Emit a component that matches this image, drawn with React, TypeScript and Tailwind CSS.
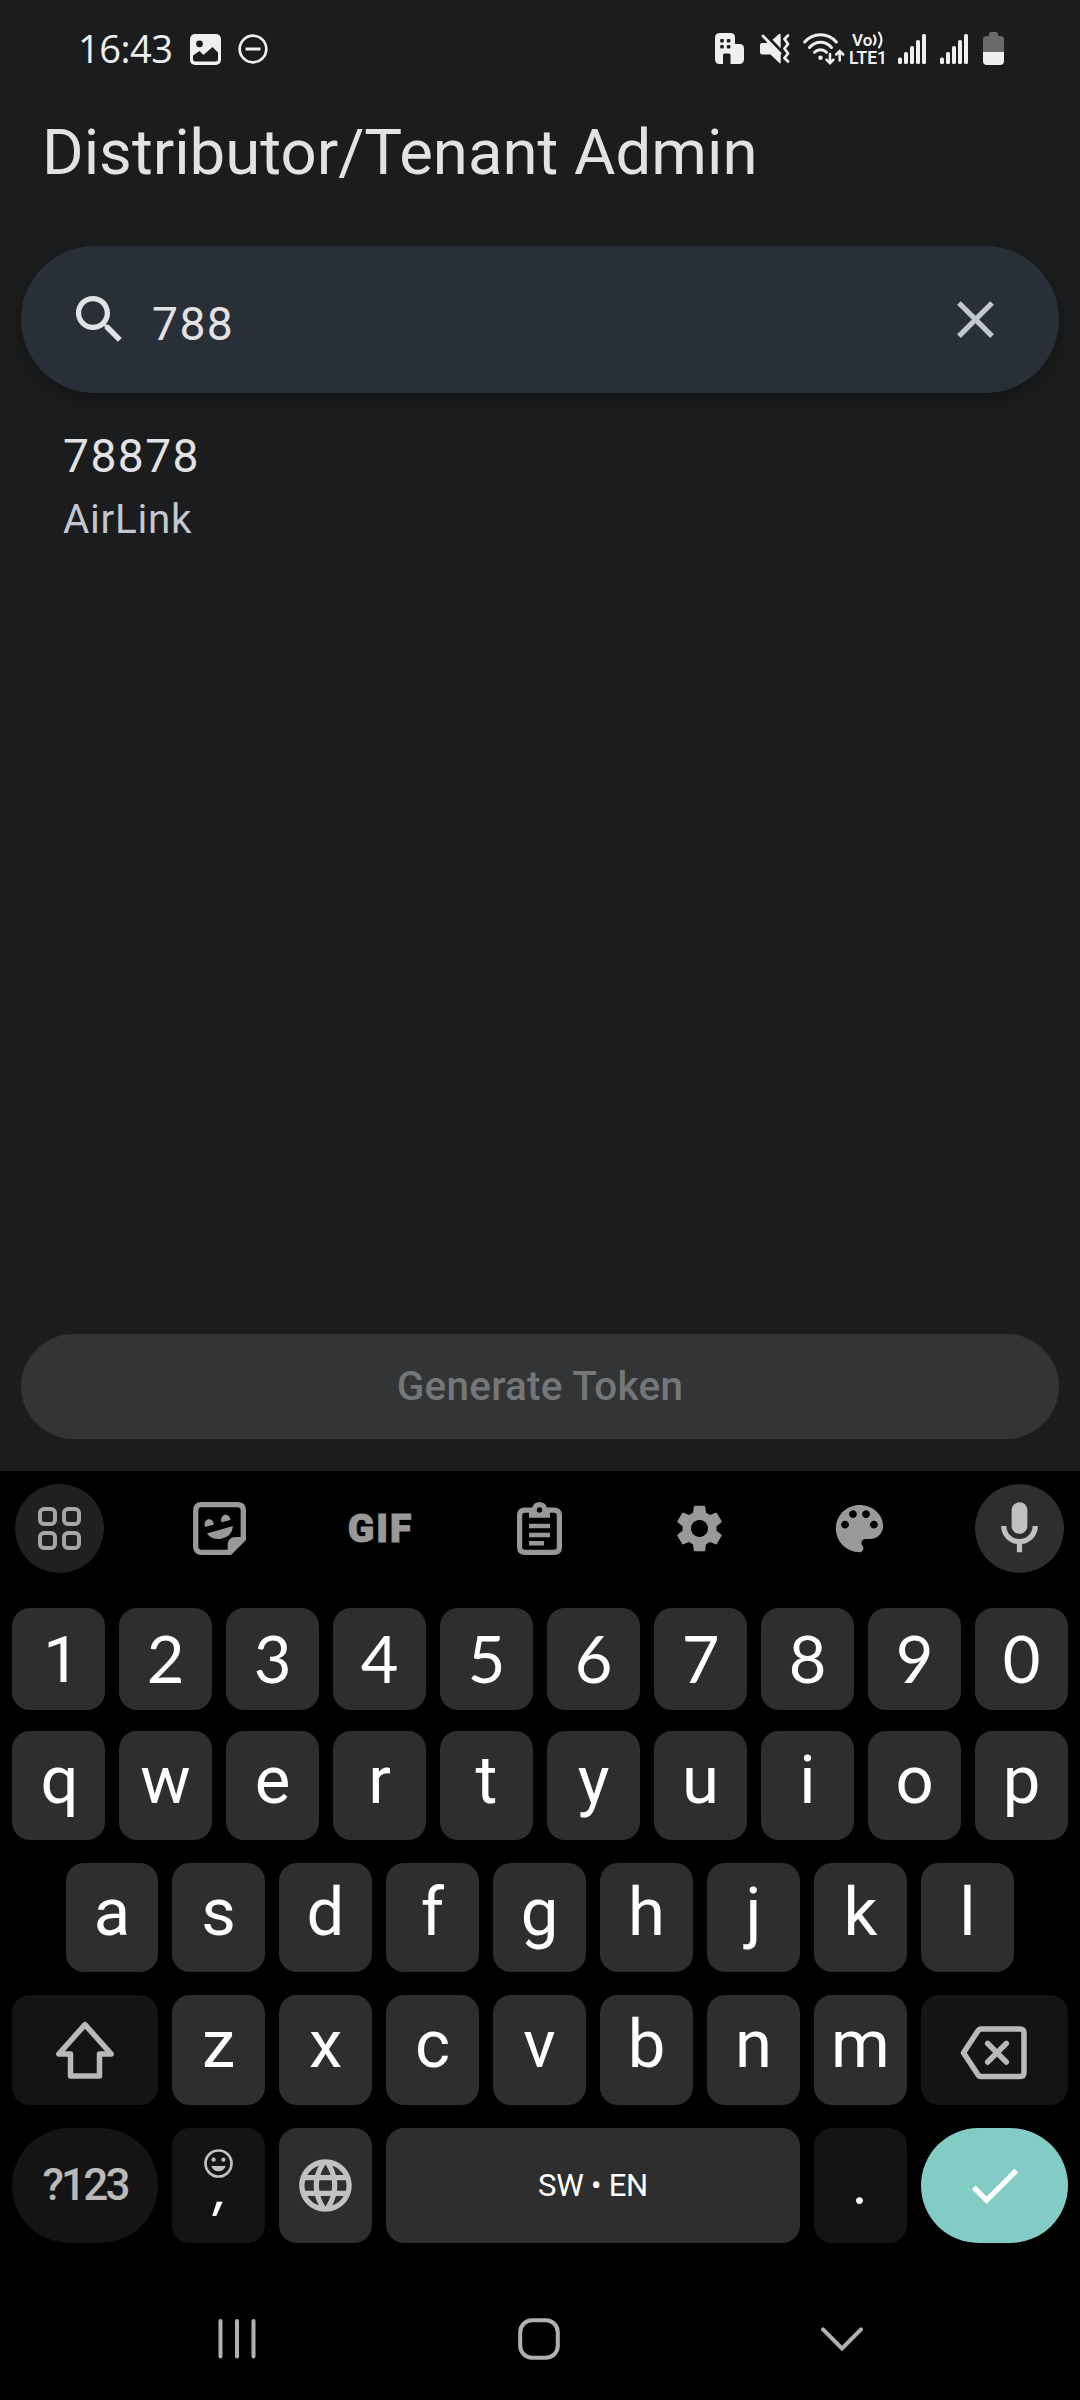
import React from "react";
import {
  MdSearch,
  MdClose,
  MdSettings,
  MdCheck,
  MdLanguage,
} from "react-icons/md";

function Signal() {
  return (
    <svg width="28" height="30" viewBox="0 0 28 30" fill="#efefef">
      <rect x="0" y="23.5" width="4" height="6.5" rx="1.6" />
      <rect x="6" y="18" width="4" height="12" rx="1.6" />
      <rect x="12" y="12" width="4" height="18" rx="1.6" />
      <rect x="18" y="6" width="4" height="24" rx="1.6" />
      <rect x="24" y="0" width="4" height="30" rx="1.6" />
    </svg>
  );
}

function StatusBar() {
  return (
    <header className="flex h-[98px] items-center pl-[78px] pr-[76px]">
      <span className="-mt-[3px] w-[96px] whitespace-nowrap font-['Open_Sans'] text-[38px] font-medium leading-none tracking-[-0.5px] text-[#efefef]">
        16:43
      </span>
      <svg className="ml-[16px] mt-px" width="31" height="31" viewBox="0 0 31 31">
        <rect width="31" height="31" rx="5" fill="#efefef" />
        <circle cx="9.5" cy="9.8" r="3.4" fill="#1a1c1e" />
        <path d="M3 21.5 L9.5 17 L13.5 21 L22.5 13 L28 18.5 V25 Q28 27.5 25.5 27.5 H5.5 Q3 27.5 3 25 Z" fill="#1a1c1e" />
      </svg>
      <svg className="ml-[17px]" width="30" height="30" viewBox="0 0 30 30" fill="none" stroke="#efefef">
        <circle cx="15" cy="15" r="13.3" strokeWidth="2.7" />
        <path d="M7.5 15 H22.5" strokeWidth="3" />
      </svg>
      <div className="-mt-px ml-auto flex items-center">
        <svg width="29" height="31" viewBox="0 0 29 31">
          <path d="M5 0 H15.5 Q20 0 20 4.5 V11 H24.5 Q29 11 29 15.5 V26 Q29 31 24 31 H15.5 V22 Q15.5 20.5 14 20.5 H9.5 Q8 20.5 8 22 V31 H4.5 Q0 31 0 26 V5 Q0 0 5 0 Z" fill="#efefef" />
          <g fill="#1a1c1e">
            <rect x="5.2" y="6" width="3.6" height="3.4" rx="1" />
            <rect x="11.8" y="6" width="3.6" height="3.4" rx="1" />
            <rect x="5.2" y="12" width="3.6" height="3.4" rx="1" />
            <rect x="11.8" y="12" width="3.6" height="3.4" rx="1" />
          </g>
        </svg>
        <svg className="ml-[16px]" width="30" height="31" viewBox="0 0 30 31">
          <path d="M0 12 Q0 10 2 10 H6.5 L8.5 8.7 L20.7 21.5 V29.5 Q20.7 31 19.3 30 L10.5 21.5 H2.5 Q0 21.5 0 19 Z" fill="#efefef" />
          <path d="M12.5 6.8 L19 1 Q20.7 0 20.7 2 V15.3 Z" fill="#efefef" />
          <path d="M3 3 L20 20.5" stroke="#efefef" strokeWidth="2.8" strokeLinecap="round" />
          <path d="M28 2.5 L24.5 6 L28 11 L24.5 15.5 L28 20.5 L24.5 25 L28 28.5" fill="none" stroke="#efefef" strokeWidth="2.8" strokeLinecap="round" strokeLinejoin="round" />
        </svg>
        <svg className="ml-[13px]" width="42" height="32" viewBox="0 0 42 32" fill="none" stroke="#efefef" strokeWidth="3" strokeLinecap="round">
          <path d="M1.7 9 Q8 1.7 17.5 1.7 Q27 1.7 33.3 9" />
          <path d="M6.5 14.5 Q11 9.2 17.5 9.2 Q24 9.2 28.5 14.5" />
          <path d="M11.5 19.3 Q14 16.8 17.5 16.8 Q21 16.8 23.5 19.3" />
          <circle cx="17.5" cy="24.7" r="2.2" fill="#efefef" stroke="none" />
          <path d="M27 21 V30 M23.5 26.7 L27 30.2 L30.5 26.7 M36.7 27.5 V18.5 M33.2 21.5 L36.7 18 L40.2 21.5" strokeWidth="2.5" />
        </svg>
        <div className="ml-[4px] flex w-[40px] flex-col font-semibold leading-none text-[#efefef]">
          <div className="flex h-[18px] items-center pl-[3px]">
            <span className="text-[17px] leading-[18px]">Vo</span>
            <svg width="12" height="18" viewBox="0 0 12 18" fill="none" stroke="#efefef" strokeWidth="2.2" strokeLinecap="round">
              <path d="M2 4.5 Q5 9 2 13.5 M7 1.7 Q12 9 7 16.3" />
            </svg>
          </div>
          <span className="h-[18px] whitespace-nowrap text-[17.5px] leading-[18px]">LTE1</span>
        </div>
        <span className="ml-[9px]"><Signal /></span>
        <span className="ml-[14px]"><Signal /></span>
        <svg className="ml-[15px]" width="21" height="33" viewBox="0 0 21 33">
          <path d="M8 0 H13 Q15 0 15 2 V4 H17.5 Q21 4 21 7.5 V20 H0 V7.5 Q0 4 3.5 4 H6 V2 Q6 0 8 0 Z" fill="#69696b" />
          <path d="M0 20 H21 V29 Q21 33 17 33 H4 Q0 33 0 29 Z" fill="#efefef" />
        </svg>
      </div>
    </header>
  );
}

function Key({ label, className = "" }: { label: string; className?: string }) {
  return (
    <div className={"flex w-[93px] items-center justify-center rounded-[18px] bg-[#2e2e2e] text-white " + className}>
      {label}
    </div>
  );
}

function Letters({ letters }: { letters: string }) {
  return (
    <>
      {letters.split("").map((c) => (
        <Key key={c} label={c} className="pb-[11px] text-[67px] leading-none" />
      ))}
    </>
  );
}

function Toolbar() {
  return (
    <div className="flex h-[115px] items-center justify-between pl-[15px] pr-[16px] text-[#999999]">
      <div className="flex size-[89px] items-center justify-center rounded-full bg-[#202020]">
        <div className="grid grid-cols-2 gap-[5px]">
          {[0, 1, 2, 3].map((i) => (
            <div key={i} className="size-[19px] rounded-[6px] border-4 border-[#a6a6a6]" />
          ))}
        </div>
      </div>
      <div className="flex w-[89px] justify-center">
        <svg width="53" height="53" viewBox="0 0 53 53">
          <path d="M38 50.3 H8.5 Q2.7 50.3 2.7 44.5 V8.5 Q2.7 2.7 8.5 2.7 H44.5 Q50.3 2.7 50.3 8.5 V37" fill="none" stroke="#999" strokeWidth="5.3" />
          <path d="M53 35 V38 L38 53 H34.7 V43 Q34.7 35 43 35 Z" fill="#999" />
          <path d="M14 31.5 L40 24 Q39 35 27.5 37 Q18 37.5 14 31.5 Z" fill="#999" />
          <path d="M12 25 Q10.5 19 15 17.3 Q19.5 16.3 21 22.5 Z" fill="#999" />
          <path d="M28.5 20.3 Q27 14.5 31.5 12.7 Q36.5 12 37.5 18 Z" fill="#999" />
        </svg>
      </div>
      <div className="flex w-[89px] justify-center pl-[2px] pt-[2px] text-[39px] font-black leading-none tracking-[2px] [-webkit-text-stroke:1px_#999]">
        GIF
      </div>
      <div className="flex w-[89px] justify-center">
        <svg width="45" height="53" viewBox="0 0 45 53">
          <path d="M8 8.2 H37 Q42.4 8.2 42.4 13.5 V45 Q42.4 50.4 37 50.4 H8 Q2.6 50.4 2.6 45 V13.5 Q2.6 8.2 8 8.2 Z" fill="none" stroke="#999" strokeWidth="5.2" />
          <path d="M12 6 H15 Q16.5 0 22.5 0 Q28.5 0 30 6 H33 V15.7 H12 Z" fill="#999" />
          <circle cx="22.5" cy="8" r="2.7" fill="#000" />
          <path d="M12 24 H33 M12 33 H33 M12 41.3 H27" stroke="#999" strokeWidth="4.5" />
        </svg>
      </div>
      <div className="flex w-[89px] justify-center"><MdSettings size={57} /></div>
      <div className="flex w-[89px] justify-center">
        <svg width="63" height="63" viewBox="0 0 24 24" fill="currentColor">
          <path d="M12 3c-4.97 0-9 4.03-9 9s4.03 9 9 9c.83 0 1.5-.67 1.5-1.5 0-.39-.15-.74-.39-1.01-.23-.26-.38-.61-.38-.99 0-.83.67-1.5 1.5-1.5H16c2.76 0 5-2.24 5-5 0-4.42-4.03-8-9-8zm-5.5 9c-.83 0-1.5-.67-1.5-1.5S5.67 9 6.5 9 8 9.67 8 10.5 7.33 12 6.5 12zm3-4C8.67 8 8 7.33 8 6.5S8.67 5 9.5 5s1.5.67 1.5 1.5S10.33 8 9.5 8zm5 0c-.83 0-1.5-.67-1.5-1.5S13.67 5 14.5 5s1.5.67 1.5 1.5S15.33 8 14.5 8zm3 4c-.83 0-1.5-.67-1.5-1.5S16.67 9 17.5 9s1.5.67 1.5 1.5-.67 1.5-1.5 1.5z" />
        </svg>
      </div>
      <div className="flex size-[89px] items-center justify-center rounded-full bg-[#2e2e2e] text-[#c1c1c1]">
        <svg width="63" height="63" viewBox="0 0 24 24" fill="currentColor">
          <path d="M12 14c1.66 0 3-1.34 3-3V5c0-1.66-1.34-3-3-3S9 3.34 9 5v6c0 1.66 1.34 3 3 3zm5-3c0 2.76-2.24 5-5 5s-5-2.24-5-5H5c0 3.53 2.61 6.43 6 6.92V21h2v-3.08c3.39-.49 6-3.39 6-6.92h-2z" />
        </svg>
      </div>
    </div>
  );
}

function Keyboard() {
  return (
    <section className="flex h-[929px] flex-col bg-black">
      <Toolbar />
      <div className="mt-[22px] flex h-[102px] gap-[14px] pl-[12px]">
        <Key label="1" className="pl-[6px] pt-[3px] text-[65px] leading-none" />
        {"234567890".split("").map((c) => (
          <Key key={c} label={c} className="pb-[2px] font-['Lato'] text-[65px] leading-none" />
        ))}
      </div>
      <div className="mt-[21px] flex h-[109px] gap-[14px] pl-[12px]">
        <Key label="q" className="pb-[11px] pl-[2px] text-[67px] leading-none" />
        <Letters letters="wertyuiop" />
      </div>
      <div className="mt-[23px] flex h-[109px] gap-[14px] pl-[66px]">
        <Key label="a" className="w-[92px]! pb-[11px] text-[67px] leading-none" />
        <Letters letters="sdfghjkl" />
      </div>
      <div className="mt-[23px] flex h-[110px] gap-[14px] pl-[12px]">
        <div className="flex w-[146px] items-center justify-center rounded-[18px] bg-[#141414]">
          <svg width="60" height="60" viewBox="0 0 60 60" fill="none" stroke="#b9b9b9" strokeWidth="5.5" strokeLinejoin="round">
            <path d="M30 4.6 L3.8 34 H15.5 V56 H44.5 V34 H56.2 Z" />
          </svg>
        </div>
        <Letters letters="zxcvbnm" />
        <div className="flex w-[147px] items-center justify-center rounded-[18px] bg-[#141414] pr-[2px] pt-[5px]">
          <svg width="68" height="54" viewBox="0 0 68 54" fill="none" stroke="#b9b9b9" strokeWidth="5.5" strokeLinecap="round" strokeLinejoin="round">
            <path d="M21 3 H60 Q64 3 64 7 V46.5 Q64 50.5 60 50.5 H21 Q19 50.5 17.5 48 L3.5 26.7 L17.5 5.5 Q19 3 21 3 Z" />
            <path d="M27.7 17.5 L46.3 36 M46.3 17.5 L27.7 36" />
          </svg>
        </div>
      </div>
      <div className="mt-[23px] flex h-[115px] gap-[14px] pl-[12px]">
        <div className="flex w-[146px] items-center justify-center rounded-full bg-[#141414] pb-[2px] text-[44px] font-medium leading-none tracking-[-2.8px] text-[#b9b9b9]">
          ?123
        </div>
        <div className="flex w-[93px] flex-col items-center rounded-[18px] bg-[#141414] pt-[21px]">
          <svg width="29" height="29" viewBox="0 0 29 29">
            <circle cx="14.5" cy="14.5" r="13" fill="none" stroke="#c1c1c1" strokeWidth="2.7" />
            <circle cx="9.6" cy="10.7" r="2.1" fill="#c1c1c1" />
            <circle cx="19.4" cy="10.7" r="2.1" fill="#c1c1c1" />
            <path d="M7.2 17 H21.8 Q19.8 22.3 14.5 22.3 Q9.2 22.3 7.2 17 Z" fill="#c1c1c1" />
          </svg>
          <span className="-mt-[14px] pl-[4px] font-['Inter'] text-[50px] font-medium italic leading-none text-white">,</span>
        </div>
        <div className="flex w-[93px] items-center justify-center rounded-[18px] bg-[#2e2e2e] text-[#c1c1c1]">
          <MdLanguage size={63} />
        </div>
        <div className="flex w-[414px] items-center justify-center rounded-[18px] bg-[#2e2e2e] text-[31px] leading-none tracking-[-0.2px] text-white">
          SW • EN
        </div>
        <div className="flex w-[93px] items-center justify-center rounded-[18px] bg-[#141414] pr-[2px] font-['Inter'] text-[52px] leading-none text-white">
          .
        </div>
        <div className="flex w-[147px] items-center justify-center rounded-full bg-[#82ccc5] text-white">
          <MdCheck size={63} />
        </div>
      </div>
      <nav className="flex flex-1 items-center justify-between pl-[218px] pr-[217px] pt-[35px]">
        <svg width="38" height="42" viewBox="0 0 38 42" stroke="#b1b1b1" strokeWidth="4" strokeLinecap="round">
          <path d="M2.5 3 V38.5 M19 3 V38.5 M35.5 3 V38.5" />
        </svg>
        <svg width="42" height="42" viewBox="0 0 42 42" fill="none">
          <rect x="2.2" y="2.2" width="37.6" height="37.6" rx="12" stroke="#b1b1b1" strokeWidth="4" />
        </svg>
        <svg width="42" height="24" viewBox="0 0 42 24" fill="none" stroke="#b1b1b1" strokeWidth="4" strokeLinecap="round">
          <path d="M2 2.3 L21 21.5 L40 2.3" />
        </svg>
      </nav>
    </section>
  );
}

export default function App() {
  return (
    <div className="flex h-[2400px] w-[1080px] flex-col overflow-hidden bg-[#1a1c1e] font-['Roboto',sans-serif] text-[#e2e2e5]">
      <StatusBar />
      <h1 className="mt-[14px] h-[81px] whitespace-nowrap pl-[42px] text-[63.5px] leading-[81px]">
        Distributor/Tenant Admin
      </h1>
      <div className="mx-[21px] mt-[53px] flex h-[147px] shrink-0 items-center rounded-full bg-[#292f37] pl-[47px] pr-[52px] shadow-[0_7px_20px_rgba(0,0,0,0.3)]">
        <MdSearch size={63} />
        <span className="ml-[21px] pt-[8px] text-[46.2px] leading-[60px] tracking-[1.44px]">788</span>
        <MdClose size={63} className="ml-auto text-[#c3c7cf]" />
      </div>
      <div className="mt-[30px] flex flex-col pl-[63px]">
        <span className="h-[67px] text-[46.2px] leading-[66px] tracking-[1.44px]">78878</span>
        <span className="h-[60px] text-[40.4px] leading-[60px] tracking-[0.72px] text-[#c3c7cf]">AirLink</span>
      </div>
      <button className="mx-[21px] mb-[32px] mt-auto flex h-[105px] shrink-0 items-center justify-center rounded-full bg-[#323435] pt-[2px] text-[40.4px] font-medium leading-none tracking-[0.29px] text-[#757678]">
        Generate Token
      </button>
      <Keyboard />
    </div>
  );
}
